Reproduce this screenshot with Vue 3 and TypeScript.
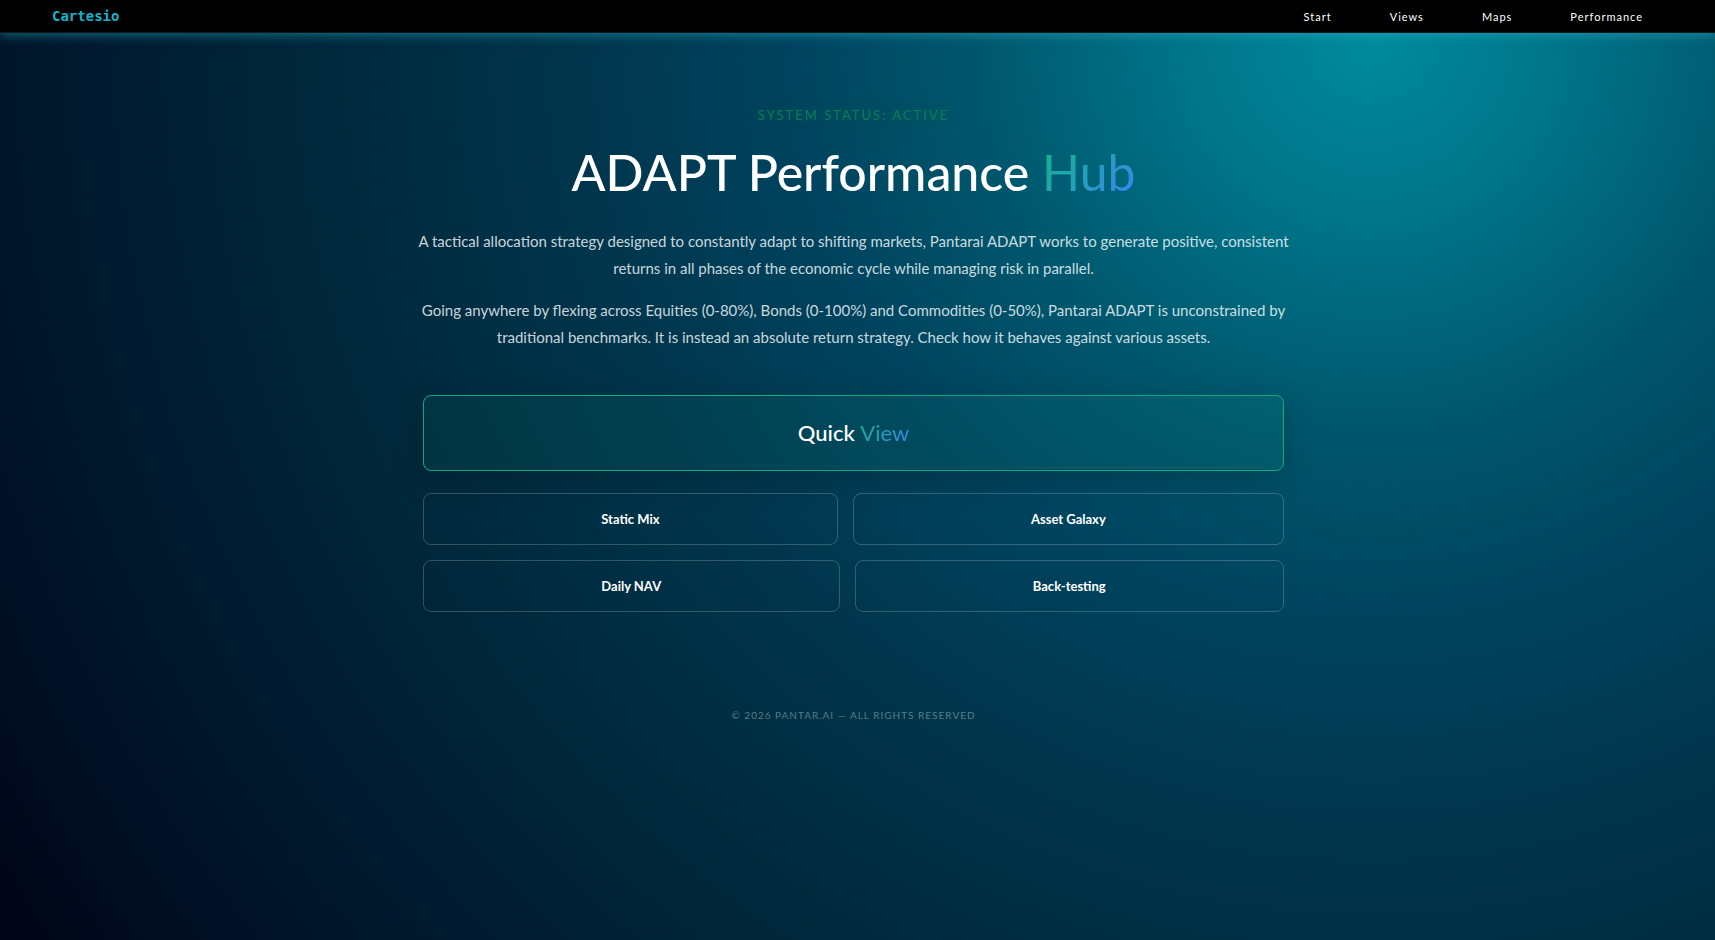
<script setup lang="ts">
interface NavLink {
  label: string
  href: string
}

const navLinks: NavLink[] = [
  { label: 'Start', href: '#start' },
  { label: 'Views', href: '#views' },
  { label: 'Maps', href: '#maps' },
  { label: 'Performance', href: '#performance' },
]

const toolRows: NavLink[][] = [
  [
    { label: 'Static Mix', href: '#static-mix' },
    { label: 'Asset Galaxy', href: '#asset-galaxy' },
  ],
  [
    { label: 'Daily NAV', href: '#daily-nav' },
    { label: 'Back-testing', href: '#back-testing' },
  ],
]
</script>

<template>
  <div class="page">
    <header class="topbar">
      <a class="brand" href="#home">Cartesio</a>
      <nav class="menu" aria-label="Main">
        <a v-for="link in navLinks" :key="link.label" :href="link.href">{{ link.label }}</a>
      </nav>
    </header>

    <main class="hub">
      <p class="status">System status: active</p>
      <h1 class="title">ADAPT Performance <span class="accent">Hub</span></h1>
      <div class="intro">
        <p>
          A tactical allocation strategy designed to constantly adapt to shifting markets, Pantarai ADAPT works to generate positive, consistent returns in all phases of the economic cycle while managing risk in parallel.
        </p>
        <p>
          Going anywhere by flexing across Equities (0-80%), Bonds (0-100%) and Commodities (0-50%), Pantarai ADAPT is unconstrained by traditional benchmarks. It is instead an absolute return strategy. Check how it behaves against various assets.
        </p>
      </div>

      <a class="quick" href="#quick-view">Quick&nbsp;<span class="accent">View</span></a>

      <div class="tools">
        <div v-for="(row, i) in toolRows" :key="i" class="tool-row">
          <a v-for="tool in row" :key="tool.label" class="tool" :href="tool.href">{{ tool.label }}</a>
        </div>
      </div>
    </main>

    <footer class="legal">© 2026 Pantar.ai — All rights reserved</footer>
  </div>
</template>

<style>
body {
  margin: 0;
  background: #000011;
}
</style>

<style scoped>
.page {
  box-sizing: border-box;
  min-height: 100vh;
  color: #fff;
  font-family: Lato, "Noto Sans", "Liberation Sans", sans-serif;
  background: radial-gradient(
    circle at 80% 32px,
    #008b9e 0%,
    #007186 13%,
    #00576d 24%,
    #00445f 35%,
    #00364d 48%,
    #00283c 64%,
    #00152a 84%,
    #000011 104%
  );
}

a {
  color: inherit;
  text-decoration: none;
}

.topbar {
  position: relative;
  box-sizing: border-box;
  height: 33px;
  padding: 0 72px 0 52px;
  display: flex;
  align-items: center;
  justify-content: space-between;
  background: #000;
  border-bottom: 1px solid #101a1c;
  box-shadow: 0 2px 10px rgba(34, 184, 207, 0.5);
}

.brand {
  color: #12b3cb;
  font-family: "DejaVu Sans Mono", monospace;
  font-size: 14px;
  font-weight: 700;
}

.menu {
  display: flex;
  gap: 58px;
  font-size: 11px;
  letter-spacing: 1px;
}

.hub {
  max-width: 861px;
  margin: 0 auto;
  padding: 72px 32px 0 24px;
  text-align: center;
}

.status {
  margin: 0;
  font-size: 13px;
  line-height: 20px;
  letter-spacing: 2px;
  text-transform: uppercase;
  color: #0b7d55;
  text-shadow: 0 0 8px rgba(0, 128, 80, 0.5);
}

.title {
  margin: 13px 0 22px;
  font-size: 50px;
  line-height: 68px;
  font-weight: 500;
}

.accent {
  font-weight: 400;
  color: transparent;
  background: linear-gradient(135deg, #10b981, #3b82f6);
  background-clip: text;
}

.intro {
  margin: 0 -8px;
  font-size: 15px;
  line-height: 27px;
  color: rgba(255, 255, 255, 0.8);
}

.intro p {
  margin: 0 0 15px;
}

.quick {
  display: flex;
  align-items: center;
  justify-content: center;
  box-sizing: border-box;
  min-height: 76px;
  margin-top: 44px;
  border: 1px solid #06ab80;
  border-radius: 8px;
  font-size: 22px;
  line-height: 32px;
  font-weight: 500;
  background: rgba(16, 185, 129, 0.08);
  box-shadow: 0 8px 32px rgba(0, 0, 0, 0.2);
}

.tools {
  display: flex;
  flex-direction: column;
  gap: 15px;
  margin-top: 22px;
}

.tool-row {
  display: flex;
  gap: 15px;
}

.tool {
  flex: 1 1 auto;
  padding: 15px;
  border: 1px solid rgba(255, 255, 255, 0.2);
  border-radius: 8px;
  font-size: 13px;
  line-height: 20px;
  font-weight: 700;
}

.legal {
  margin-top: 93px;
  padding: 0 8px 40px 0;
  text-align: center;
  font-size: 10px;
  line-height: 20px;
  letter-spacing: 1px;
  text-transform: uppercase;
  color: rgba(255, 255, 255, 0.36);
}
</style>
